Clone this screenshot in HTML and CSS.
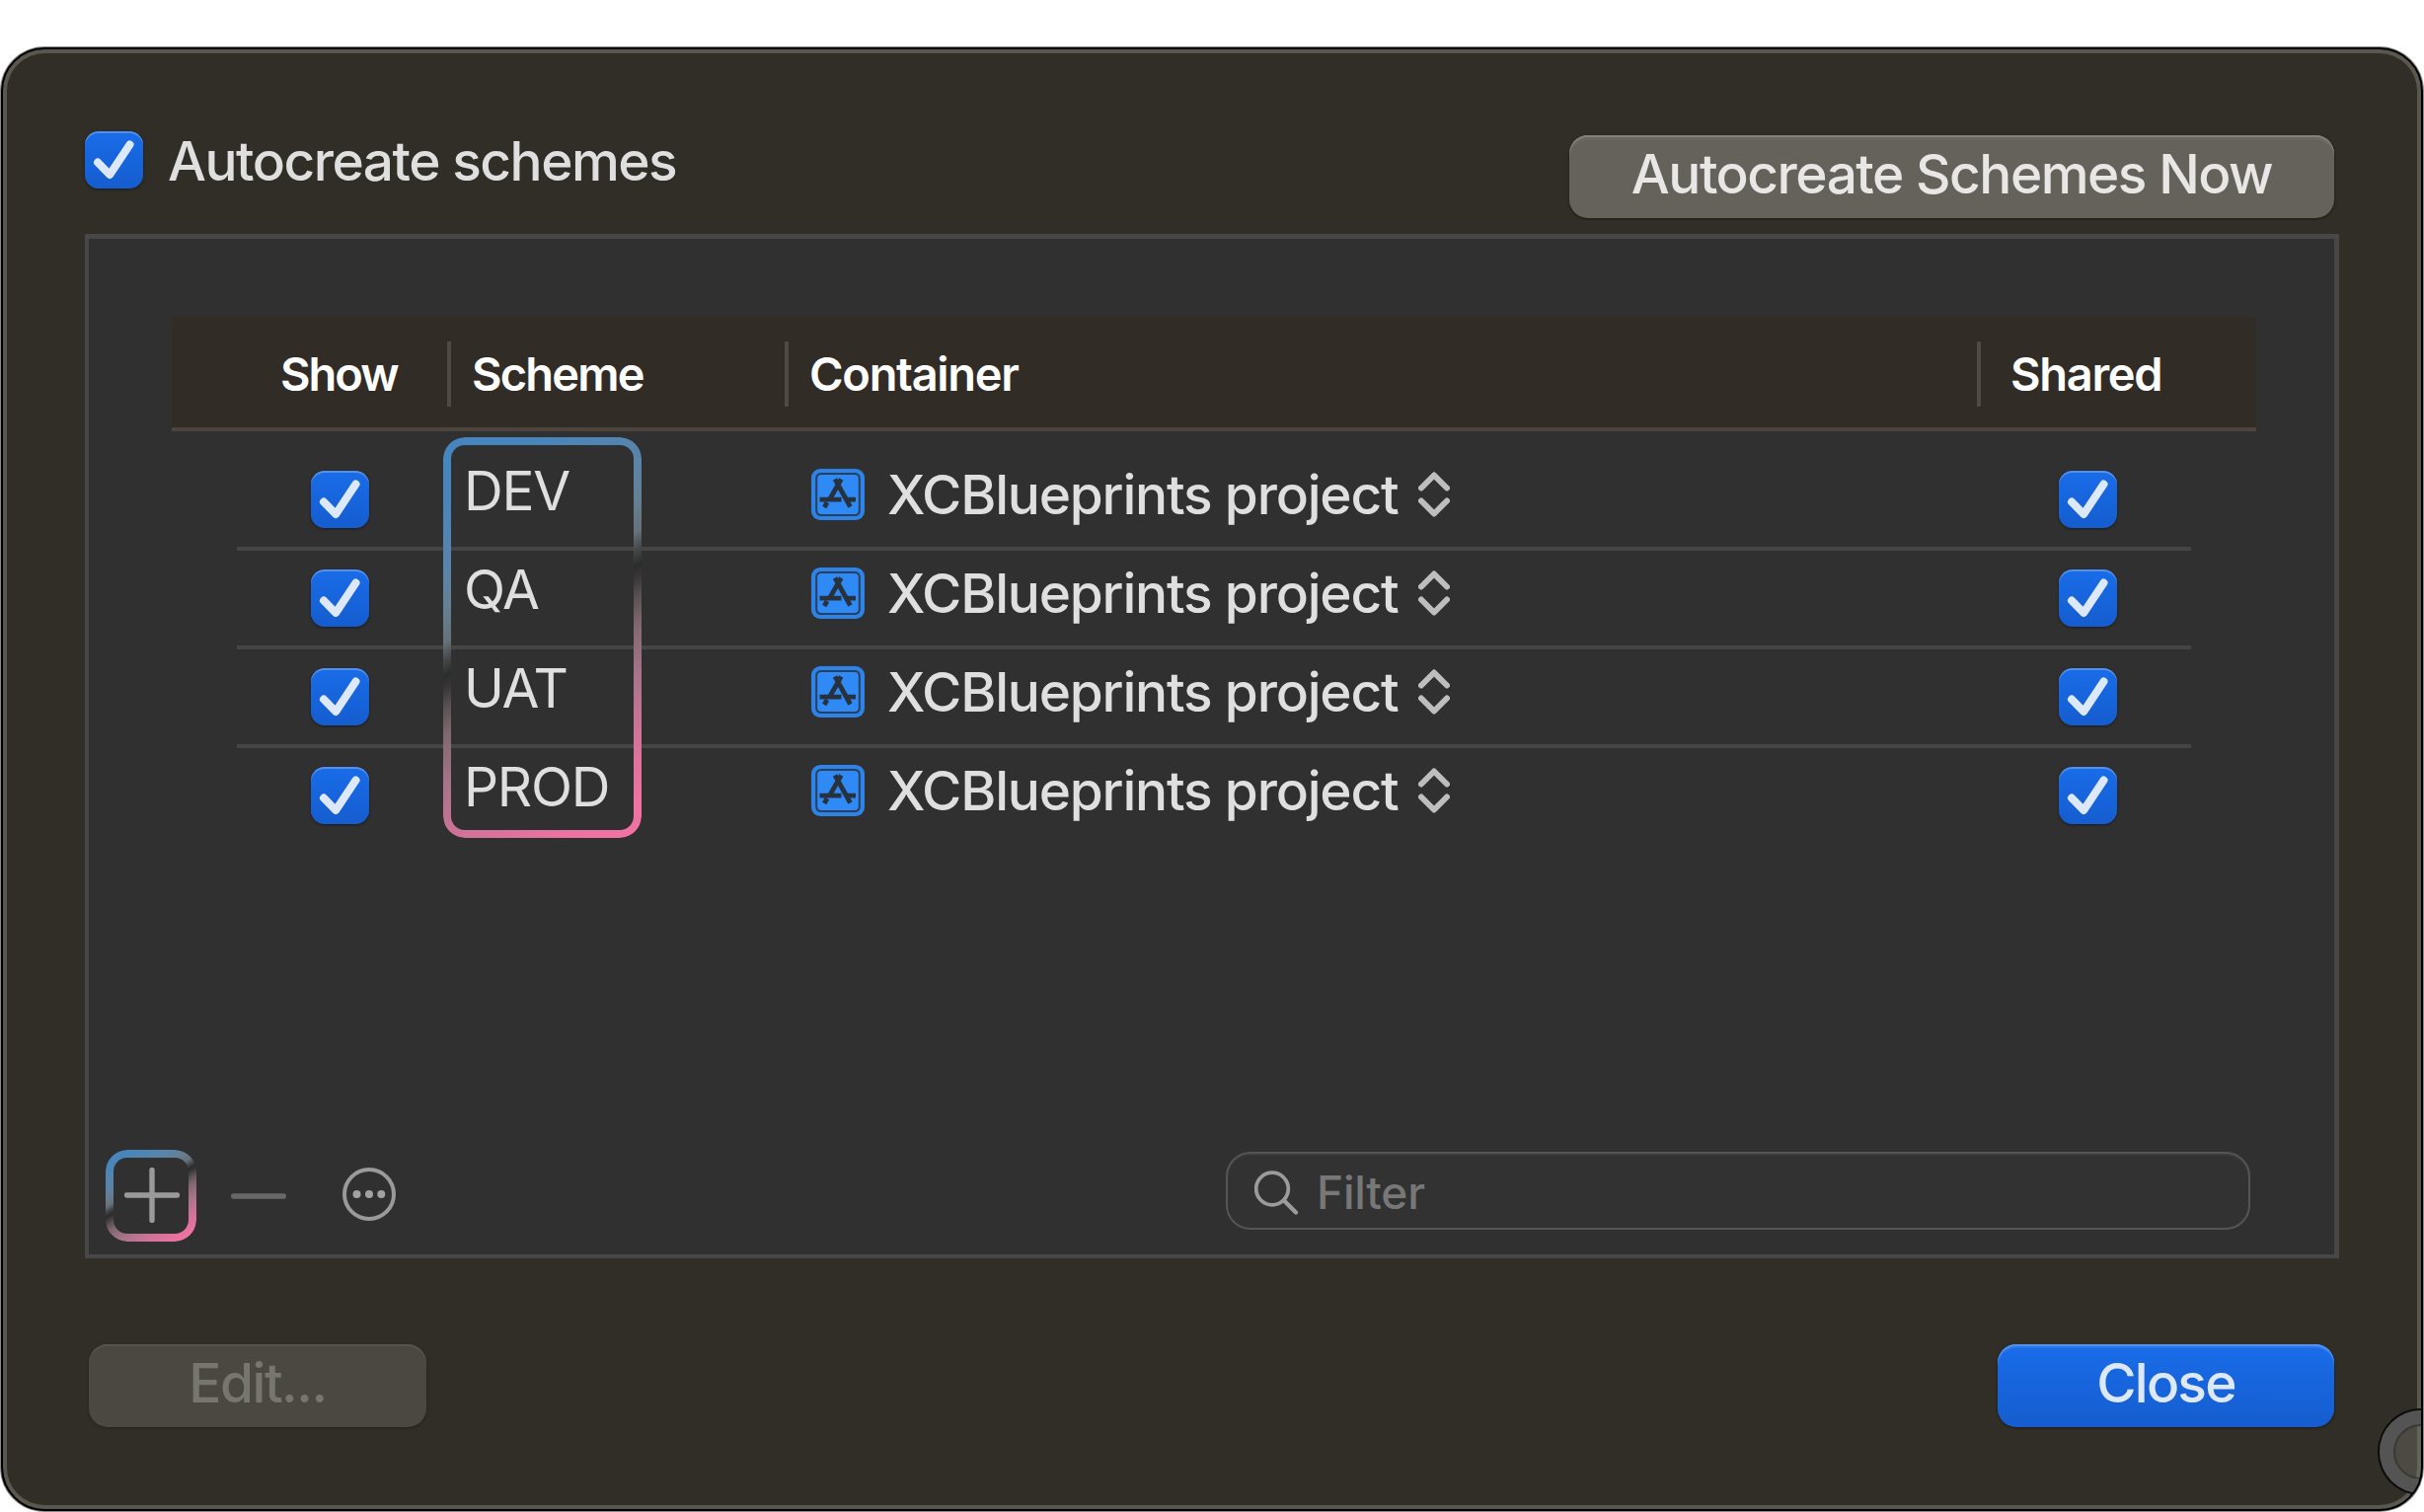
FILE: index.html
```html
<!DOCTYPE html>
<html lang="en">
<head>
<meta charset="utf-8">
<title>Manage Schemes</title>
<link rel="stylesheet" href="styles.css">
</head>
<body>
<svg class="defs" width="0" height="0" aria-hidden="true">
  <symbol id="check" viewBox="0 0 59 58"><path d="M13 31.5 L25.2 44 L45.5 13.5" fill="none" stroke="#dde8fb" stroke-width="8" stroke-linecap="round" stroke-linejoin="round"/></symbol>
  <symbol id="project" viewBox="0 0 54 52">
    <rect width="54" height="52" rx="9" fill="#2d83e8"/>
    <rect x="4.2" y="4" width="45.6" height="44" rx="5.5" fill="#2a3f59"/>
    <rect x="6.2" y="6" width="41.6" height="40" rx="4" fill="#2f8af5"/>
    <g fill="none" stroke="#28323e" stroke-width="4.8">
      <path d="M24 10.5 L39.5 38.5 M30.3 10.5 L18.6 31"/>
      <path d="M8.5 31.2 H30.5 M36 31.2 H45"/>
      <path d="M16 34 L13.2 39"/>
    </g>
  </symbol>
  <symbol id="updown" viewBox="0 0 32 48"><path d="M3 17.5 L16 4.5 L29 17.5 M3 30.5 L16 43.5 L29 30.5" fill="none" stroke="#bebebe" stroke-width="6" stroke-linecap="round" stroke-linejoin="round"/></symbol>
</svg>

<main class="sheet">
  <header class="toolbar">
    <span class="checkbox"><svg><use href="#check"/></svg></span>
    <span class="toolbar-label">Autocreate schemes</span>
    <button class="btn btn-now"><span>Autocreate Schemes Now</span></button>
  </header>

  <section class="panel">
    <div class="table">
      <div class="thead">
        <span class="th th-show">Show</span>
        <span class="th th-scheme">Scheme</span>
        <span class="th th-container">Container</span>
        <span class="th th-shared">Shared</span>
      </div>
      <div class="rows">
        <div class="row">
          <span class="checkbox show"><svg><use href="#check"/></svg></span>
          <span class="scheme">DEV</span>
          <span class="container"><svg class="project"><use href="#project"/></svg><span>XCBlueprints project</span><svg class="updown"><use href="#updown"/></svg></span>
          <span class="checkbox shared"><svg><use href="#check"/></svg></span>
        </div>
        <div class="row">
          <span class="checkbox show"><svg><use href="#check"/></svg></span>
          <span class="scheme">QA</span>
          <span class="container"><svg class="project"><use href="#project"/></svg><span>XCBlueprints project</span><svg class="updown"><use href="#updown"/></svg></span>
          <span class="checkbox shared"><svg><use href="#check"/></svg></span>
        </div>
        <div class="row">
          <span class="checkbox show"><svg><use href="#check"/></svg></span>
          <span class="scheme">UAT</span>
          <span class="container"><svg class="project"><use href="#project"/></svg><span>XCBlueprints project</span><svg class="updown"><use href="#updown"/></svg></span>
          <span class="checkbox shared"><svg><use href="#check"/></svg></span>
        </div>
        <div class="row">
          <span class="checkbox show"><svg><use href="#check"/></svg></span>
          <span class="scheme">PROD</span>
          <span class="container"><svg class="project"><use href="#project"/></svg><span>XCBlueprints project</span><svg class="updown"><use href="#updown"/></svg></span>
          <span class="checkbox shared"><svg><use href="#check"/></svg></span>
        </div>
        <div class="highlight scheme-highlight"></div>
      </div>
    </div>

    <div class="panel-footer">
      <div class="add">
        <div class="highlight"></div>
        <svg width="56" height="56" viewBox="0 0 56 56"><path d="M2.5 28 H53.5 M28 2.5 V53.5" stroke="#9a9a9a" stroke-width="5.4" stroke-linecap="round"/></svg>
      </div>
      <svg class="remove" width="56" height="6" viewBox="0 0 56 6"><path d="M2.7 3 H53.3" stroke="#686868" stroke-width="5.4" stroke-linecap="round"/></svg>
      <svg class="more" width="54" height="54" viewBox="0 0 54 54"><circle cx="27" cy="27" r="25" fill="none" stroke="#9a9a9a" stroke-width="4"/><g fill="#a2a2a2"><circle cx="14.5" cy="27" r="4"/><circle cx="27" cy="27" r="4"/><circle cx="39.3" cy="27" r="4"/></g></svg>
      <div class="filter">
        <svg width="46" height="46" viewBox="0 0 46 46"><circle cx="18" cy="18.5" r="16.3" fill="none" stroke="#9b9b9b" stroke-width="3.8"/><path d="M30 30.5 L42 42.5" stroke="#9b9b9b" stroke-width="4.4" stroke-linecap="round"/></svg>
        <span>Filter</span>
      </div>
    </div>
  </section>

  <footer class="actions">
    <button class="btn btn-edit"><span>Edit...</span></button>
    <button class="btn btn-close"><span>Close</span></button>
  </footer>
  <div class="grabber"></div>
</main>
</body>
</html>
```
FILE: styles.css
```css
* { box-sizing: border-box; }

body {
  margin: 0;
  padding: 48px 1px 1px;
  height: 1532px;
  overflow: hidden;
  background: #fff;
  font-family: Inter, "Liberation Sans", sans-serif;
  font-size: 55px;
  font-weight: 500;
  letter-spacing: -1.5px;
  color: #dfdfdf;
  white-space: nowrap;
}

.defs { position: absolute; }
svg { display: block; flex: none; }

.sheet {
  position: relative;
  display: flex;
  flex-direction: column;
  height: 1483px;
  padding: 0 83px;
  overflow: hidden;
  border: 2px solid #000;
  border-radius: 44px;
  background: #312e27;
  box-shadow: 0 0 0 1px rgba(0, 0, 0, .45), inset 0 0 0 4px #5a574f;
}

/* Top bar */
.toolbar {
  display: flex;
  align-items: flex-start;
  height: 187px;
  padding-top: 83px;
}

.toolbar-label {
  margin-left: 25px;
  line-height: 61px;
}

.checkbox {
  flex: none;
  width: 59px;
  height: 58px;
  border-radius: 14px;
  background: linear-gradient(#196ce9, #155dcf);
  box-shadow: inset 0 2px 0 rgba(255, 255, 255, .25), 0 1px 3px rgba(0, 0, 0, .45);
}
.checkbox svg { width: 59px; height: 58px; }

.btn {
  height: 84px;
  padding: 0;
  border: 0;
  border-radius: 19px;
  font: inherit;
  letter-spacing: inherit;
  line-height: 78px;
  text-align: center;
}
.btn span { display: block; height: 84px; }

.btn-now {
  width: 775px;
  margin: 4px 5px 0 auto;
  background: #65625b;
  color: #e8e7e6;
  letter-spacing: -1.5px;
  box-shadow: inset 0 2px 0 #85827c, inset 0 5px 0 #6b6861, 0 1px 3px rgba(0, 0, 0, .45);
}

/* Scheme list */
.panel {
  display: flex;
  flex-direction: column;
  width: 2284px;
  height: 1038px;
  border: solid #474747;
  border-width: 5px 5px 4px 4px;
  background: #303030;
}

.table { margin: 79px 79px 0 84px; }

.thead {
  display: grid;
  grid-template-columns: 279px 342px 1208px 283px;
  align-items: start;
  height: 116px;
  padding-top: 25px;
  border-bottom: 4px solid #4b453d;
  background: #312c26;
  color: #fff;
  font-size: 47px;
  font-weight: 600;
  letter-spacing: -1.3px;
}
.th { height: 66px; line-height: 66px; padding-left: 21px; border-left: 4px solid #4f4a43; }
.th-show { padding-left: 110px; border-left: 0; letter-spacing: -2px; }
.th-scheme { letter-spacing: -1.8px; }
.th-shared { padding-left: 30px; }

.rows { position: relative; margin: 0 66px; padding-top: 21px; }

.row {
  display: grid;
  grid-template-columns: 213px 342px 1208px 217px;
  align-items: start;
  height: 100px;
  padding-top: 19px;
  border-bottom: 4px solid #454545;
}
.row:nth-child(4) { border-bottom: 0; }

.show { margin-left: 75px; }
.shared { margin-left: 83px; }
.scheme { padding-left: 17px; line-height: 40px; font-weight: 400; letter-spacing: -1.3px; }
.container { display: flex; height: 48px; padding-left: 27px; line-height: 48px; }
.project { width: 54px; height: 52px; margin-top: -2px; }
.container span { width: 544px; margin-left: 23px; letter-spacing: -1.2px; }
.updown { width: 32px; height: 48px; margin-left: -6px; }

/* Gradient outline: the mask keeps only the padding ring */
.highlight {
  position: absolute;
  inset: 0;
  padding: 8px;
  border-radius: 22px;
  background: linear-gradient(150deg, #4585bf 0, #4885bb 12%, #5b84a8 27%, #667f92 34%, #66717a 40%, #45484a 43.5%, #2c2c2c 46.5%, #393738 49%, #5c5355 53%, #80686f 58%, #a8748a 68%, #d3739a 80%, #ee72a2 92%, #f072a3 100%);
  mask-image: linear-gradient(#000, #000), linear-gradient(#000, #000);
  mask-clip: content-box, border-box;
  mask-composite: exclude;
}
.highlight::after {
  content: "";
  position: absolute;
  inset: 8px;
}
.scheme-highlight { inset: 5.5px auto auto 208.5px; width: 201px; height: 406.5px; }

.panel-footer {
  display: flex;
  align-items: center;
  margin-top: auto;
  height: 93px;
  margin-bottom: 13px;
  padding: 0 85px 0 17px;
}

.add { position: relative; width: 92px; height: 93px; padding: 18px 0 0 19px; }
.add svg { position: relative; }
.remove { margin-left: 35px; }
.more { margin: -3px 0 0 57px; }

.filter {
  display: flex;
  width: 1038px;
  height: 79px;
  margin: -10px 0 0 auto;
  padding: 15px 0 0 27px;
  border: 2px solid #555;
  border-radius: 25px;
  background: #323232;
  box-shadow: inset 0 2px 0 #3a3a3a;
  color: #777;
  font-size: 46px;
}
.filter svg { margin-top: 2px; }
.filter span { margin-left: 17px; line-height: 48px; letter-spacing: -.2px; }

/* Bottom buttons */
.actions {
  display: flex;
  justify-content: space-between;
  margin-top: 87px;
  padding: 0 5px 0 4px;
}

.btn-edit {
  width: 342px;
  background: #4b4841;
  color: #777570;
  box-shadow: inset 0 2px 0 #57544d, 0 1px 3px rgba(0, 0, 0, .3);
}
.btn-close {
  width: 341px;
  background: linear-gradient(#196ce9, #155dcf);
  color: #dde8fb;
  letter-spacing: -1.8px;
  box-shadow: inset 0 2px 0 #5590ee, inset 0 4px 0 #2b76e9, 0 1px 3px rgba(0, 0, 0, .45);
}

/* Round handle cut off by the window's corner */
.grabber {
  position: absolute;
  top: 1379px;
  left: 2408px;
  width: 84px;
  height: 84px;
  border: 14px solid #545454;
  border-radius: 50%;
  background: rgba(120, 120, 112, .38);
  background-clip: padding-box;
  box-shadow: 0 0 0 2px #0c0b09, inset 0 0 0 2px #3b3935;
}
```
